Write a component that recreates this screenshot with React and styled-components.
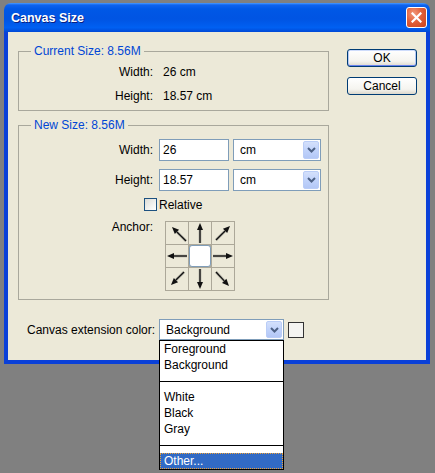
import React from "react";
import styled, { createGlobalStyle } from "styled-components";

const GlobalStyle = createGlobalStyle`
  html, body {
    margin: 0;
    padding: 0;
    background: #808080;
  }
  body {
    font-family: "Liberation Sans", Arial, sans-serif;
    font-size: 12px;
    color: #000;
  }
  * {
    box-sizing: border-box;
  }
`;

const colors = {
  face: "#ECE9D8",
  frame: "#0A40D8",
  legend: "#0046D5",
  field: "#7F9DB9",
  groupLine: "#A9A89C",
  select: "#316AC5",
};

const Desktop = styled.div`
  width: 435px;
  height: 473px;
  padding: 3px 0 0 4px;
  overflow: hidden;
`;

const Window = styled.div`
  width: 426px;
  position: relative;
`;

const TitleBar = styled.div`
  height: 29px;
  display: flex;
  align-items: center;
  justify-content: space-between;
  padding: 0 3px 0 7px;
  border-radius: 7px 7px 0 0;
  background: linear-gradient(
    180deg,
    #4a9bff 0px,
    #0f63ee 2px,
    #0058e6 6px,
    #0054e3 55%,
    #0060f2 85%,
    #0048d6 100%
  );
`;

const Title = styled.span`
  color: #fff;
  font-weight: bold;
  font-size: 12.5px;
  text-shadow: 1px 1px 0 #0a1f80;
`;

const CloseButton = styled.div`
  width: 21px;
  height: 21px;
  border: 1px solid #fff;
  border-radius: 3px;
  background: radial-gradient(circle at 35% 30%, #f29a7c 0%, #e2603a 45%, #c8421c 100%);
  display: flex;
  align-items: center;
  justify-content: center;
`;

const Body = styled.div`
  background: ${colors.face};
  border: 4px solid ${colors.frame};
  border-top: none;
  display: flex;
  gap: 18px;
  padding: 12px 9px 20px 10px;
`;

const Column = styled.div`
  width: 311px;
  display: flex;
  flex-direction: column;
`;

const Group = styled.fieldset`
  margin: ${({ $top }) => $top || 0}px 0 0 0;
  padding: 0 0 ${({ $bottom }) => $bottom || 6}px 0;
  border: 1px solid ${colors.groupLine};
  min-width: 0;
`;

const Legend = styled.legend`
  color: ${colors.legend};
  line-height: 14px;
  padding: 0 3px;
  margin-left: 12px;
`;

const InfoGrid = styled.div`
  display: grid;
  grid-template-columns: 134px auto;
  column-gap: 10px;
  row-gap: 8px;
  line-height: 16px;
  padding-top: 6px;
`;

const Label = styled.span`
  text-align: right;
  align-self: ${({ $top }) => ($top ? "start" : "center")};
  line-height: 14px;
  margin-top: ${({ $top }) => ($top ? "-1px" : "0")};
  white-space: nowrap;
`;

const FieldGrid = styled.div`
  display: grid;
  grid-template-columns: 134px auto;
  column-gap: ${({ $gap }) => $gap}px;
  row-gap: 8px;
  padding-top: ${({ $pad }) => $pad || 0}px;
  margin-top: ${({ $top }) => $top || 0}px;
`;

const Pair = styled.div`
  display: flex;
  gap: 4px;
`;

const TextInput = styled.div`
  width: 70px;
  height: 22px;
  border: 1px solid ${colors.field};
  background: #fff;
  padding-left: 3px;
  display: flex;
  align-items: center;
`;

const Select = styled.div`
  width: ${({ $w }) => $w}px;
  height: ${({ $h }) => $h || 22}px;
  border: 1px solid ${colors.field};
  background: #fff;
  display: flex;
  align-items: center;
  justify-content: space-between;
  padding: 1px 1px 1px 6px;
`;

const DropButton = styled.div`
  width: 16px;
  height: 100%;
  border: 1px solid #bacdf7;
  border-radius: 2px;
  background: linear-gradient(180deg, #d4e0fb 0%, #c1d3fb 50%, #b3c7f6 100%);
  display: flex;
  align-items: center;
  justify-content: center;
`;

const CheckRow = styled.label`
  display: flex;
  align-items: center;
  gap: 2px;
  height: 13px;
  margin-top: 7px;
  padding-left: 125px;
`;

const CheckBox = styled.span`
  width: 13px;
  height: 13px;
  border: 1px solid #1c5180;
  background: linear-gradient(135deg, #dcdcd7 0%, #f6f6f3 70%, #fff 100%);
`;

const AnchorGrid = styled.div`
  width: 70px;
  height: 70px;
  display: grid;
  grid-template-columns: repeat(3, 22px);
  grid-template-rows: repeat(3, 22px);
  gap: 1px;
  padding: 1px;
  background: #aca899;
`;

const Cell = styled.div`
  background: ${({ $center }) => ($center ? "#fff" : colors.face)};
  border: ${({ $center }) => ($center ? `1px solid ${colors.field}` : "none")};
  border-radius: ${({ $center }) => ($center ? "3px" : "0")};
  display: flex;
`;

const ExtRow = styled.div`
  display: flex;
  align-items: center;
  margin-top: 19px;
  padding-left: 9px;
`;

const ExtLabel = styled.span`
  width: 126px;
  margin-right: 6px;
  white-space: nowrap;
`;

const SelectWrap = styled.div`
  position: relative;
`;

const Swatch = styled.div`
  width: 16px;
  height: 16px;
  margin-left: 4px;
  border: 1px solid #333;
  background: #f4f4f1;
`;

const List = styled.div`
  position: absolute;
  top: 100%;
  left: 0;
  width: 125px;
  border: 1px solid #000;
  background: #fff;
  z-index: 5;
`;

const Item = styled.div`
  height: 16px;
  line-height: 14px;
  padding-left: 3px;
  border: 1px solid ${({ $active }) => ($active ? "#f0a236" : "transparent")};
  border-style: ${({ $active }) => ($active ? "dotted" : "solid")};
  background: ${({ $active }) => ($active ? colors.select : "transparent")};
  color: ${({ $active }) => ($active ? "#fff" : "#000")};
  white-space: nowrap;
`;

const Separator = styled.div`
  height: 16px;
  display: flex;
  align-items: center;
  &::after {
    content: "";
    flex: 1;
    height: 1px;
    background: #000;
  }
`;

const ButtonColumn = styled.div`
  display: flex;
  flex-direction: column;
  gap: 10px;
  padding-top: 5px;
`;

const Button = styled.div`
  width: 70px;
  height: 18px;
  border: 1px solid #003c74;
  border-radius: 3px;
  background: linear-gradient(180deg, #ffffff 0%, #f5f4ef 70%, #dcd8cc 100%);
  display: flex;
  align-items: center;
  justify-content: center;
  line-height: 14px;
  box-shadow: ${({ $default }) =>
    $default ? "inset 0 1px 0 0 #cedcfb, inset 0 -1px 0 0 #6982ee, inset 1px 0 0 0 #b4c8f6, inset -1px 0 0 0 #b4c8f6" : "none"};
`;

function Chevron() {
  return (
    <svg width="9" height="6" viewBox="0 0 9 6">
      <path d="M1 1 L4.5 4.5 L8 1" fill="none" stroke="#4d6185" strokeWidth="2" />
    </svg>
  );
}

function CloseX() {
  return (
    <svg width="11" height="11" viewBox="0 0 11 11">
      <path d="M1.5 1.5 L9.5 9.5 M9.5 1.5 L1.5 9.5" stroke="#fff" strokeWidth="2.2" strokeLinecap="square" />
    </svg>
  );
}

const arrows = {
  nw: [[20, 19], [6, 5]],
  n: [[11, 21], [11, 1]],
  ne: [[4, 18], [18, 4]],
  w: [[21, 11], [1, 11]],
  e: [[1, 11], [21, 11]],
  sw: [[18, 4], [5, 17]],
  s: [[11, 1], [11, 21]],
  se: [[4, 4], [17, 18]],
};

function Arrow({ dir }) {
  const [[x1, y1], [x2, y2]] = arrows[dir];
  const len = Math.hypot(x2 - x1, y2 - y1);
  const ux = (x2 - x1) / len;
  const uy = (y2 - y1) / len;
  const bx = x2 - ux * 7;
  const by = y2 - uy * 7;
  const px = -uy * 3;
  const py = ux * 3;
  return (
    <svg width="22" height="22" viewBox="0 0 22 22">
      <line x1={x1} y1={y1} x2={bx} y2={by} stroke="#7a7a72" strokeWidth="3" opacity="0.35" />
      <line x1={x1} y1={y1} x2={bx} y2={by} stroke="#111" strokeWidth="1.4" />
      <polygon points={`${x2},${y2} ${bx + px},${by + py} ${bx - px},${by - py}`} fill="#111" />
    </svg>
  );
}

const anchorCells = ["nw", "n", "ne", "w", null, "e", "sw", "s", "se"];
const colorOptions = [
  { label: "Foreground" },
  { label: "Background" },
  { sep: true },
  { label: "White" },
  { label: "Black" },
  { label: "Gray" },
  { sep: true },
  { label: "Other...", active: true },
];

export default function App() {
  return (
    <Desktop>
      <GlobalStyle />
      <Window>
        <TitleBar>
          <Title>Canvas Size</Title>
          <CloseButton>
            <CloseX />
          </CloseButton>
        </TitleBar>
        <Body>
          <Column>
            <Group>
              <Legend>Current Size: 8.56M</Legend>
              <InfoGrid>
                <Label>Width:</Label>
                <span>26 cm</span>
                <Label>Height:</Label>
                <span>18.57 cm</span>
              </InfoGrid>
            </Group>

            <Group $top={7} $bottom={8}>
              <Legend>New Size: 8.56M</Legend>
              <FieldGrid $gap={6} $pad={7}>
                <Label>Width:</Label>
                <Pair>
                  <TextInput>26</TextInput>
                  <Select $w={88}>
                    <span>cm</span>
                    <DropButton>
                      <Chevron />
                    </DropButton>
                  </Select>
                </Pair>
                <Label>Height:</Label>
                <Pair>
                  <TextInput>18.57</TextInput>
                  <Select $w={88}>
                    <span>cm</span>
                    <DropButton>
                      <Chevron />
                    </DropButton>
                  </Select>
                </Pair>
              </FieldGrid>
              <CheckRow>
                <CheckBox />
                <span>Relative</span>
              </CheckRow>
              <FieldGrid $gap={12} $top={10}>
                <Label $top>Anchor:</Label>
                <AnchorGrid>
                  {anchorCells.map((d, i) => (
                    <Cell key={i} $center={!d}>
                      {d && <Arrow dir={d} />}
                    </Cell>
                  ))}
                </AnchorGrid>
              </FieldGrid>
            </Group>

            <ExtRow>
              <ExtLabel>Canvas extension color:</ExtLabel>
              <SelectWrap>
                <Select $w={125} $h={21}>
                  <span>Background</span>
                  <DropButton>
                    <Chevron />
                  </DropButton>
                </Select>
                <List>
                  {colorOptions.map((o, i) =>
                    o.sep ? (
                      <Separator key={i} />
                    ) : (
                      <Item key={i} $active={o.active}>
                        {o.label}
                      </Item>
                    )
                  )}
                </List>
              </SelectWrap>
              <Swatch />
            </ExtRow>
          </Column>

          <ButtonColumn>
            <Button $default>OK</Button>
            <Button>Cancel</Button>
          </ButtonColumn>
        </Body>
      </Window>
    </Desktop>
  );
}
